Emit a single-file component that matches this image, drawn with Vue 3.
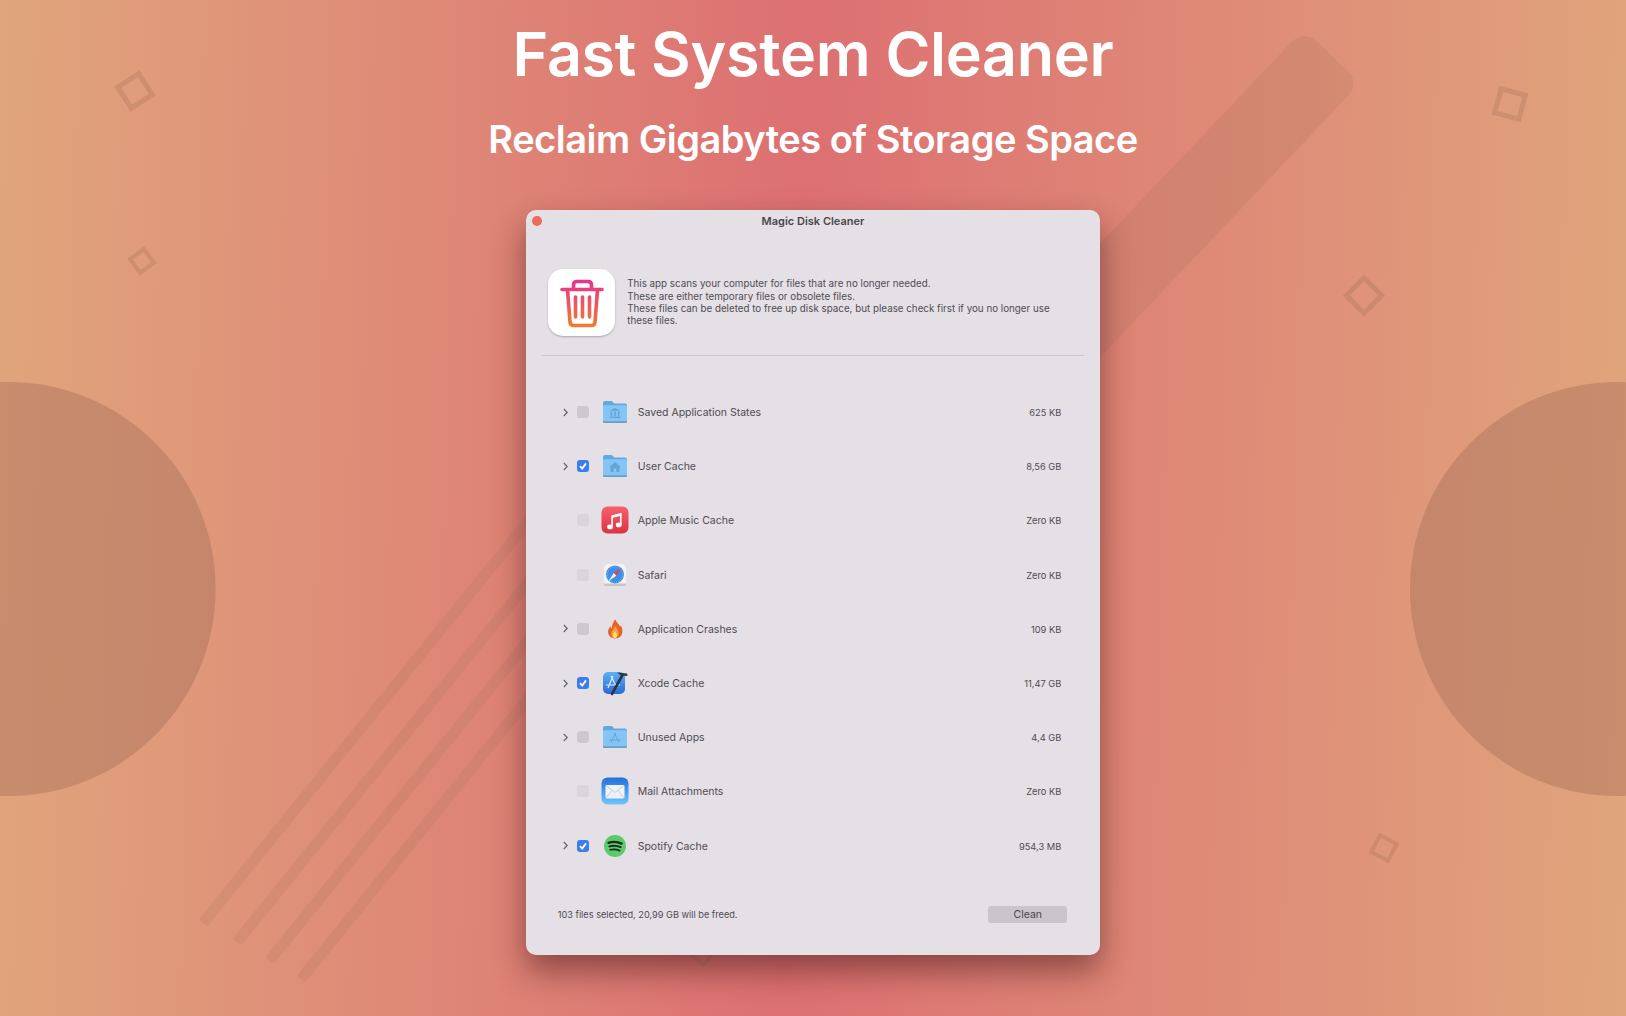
<template>
  <div class="page">
    <!-- background decoration -->
    <svg class="backdrop" width="1626" height="1016" viewBox="0 0 1626 1016">
      <g fill="#a8725a" fill-opacity="0.45">
        <circle cx="8.6" cy="589" r="207" />
        <circle cx="1617" cy="589" r="207" />
      </g>
      <rect
        x="0"
        y="-39"
        width="500"
        height="78"
        rx="17"
        fill="#a8725a"
        fill-opacity="0.22"
        transform="translate(1332 56) rotate(133.5)"
      />
      <g fill="#a8725a" fill-opacity="0.2">
        <rect
          v-for="l in stripes"
          :key="l.x"
          x="0"
          y="-5.5"
          width="520"
          height="11"
          rx="3"
          :transform="`translate(${l.x} ${l.y}) rotate(-51)`"
        />
      </g>
      <g fill="none" stroke="#a8725a" stroke-opacity="0.32">
        <rect
          v-for="d in diamonds"
          :key="d.x"
          :x="-d.s / 2"
          :y="-d.s / 2"
          :width="d.s"
          :height="d.s"
          :stroke-width="d.w"
          :transform="`translate(${d.x} ${d.y}) rotate(${d.r})`"
        />
      </g>
    </svg>

    <header class="heading">
      <h1>Fast System Cleaner</h1>
      <h2>Reclaim Gigabytes of Storage Space</h2>
    </header>

    <section class="window">
      <div class="titlebar">
        <span class="close-dot"></span>
        <span class="window-title">Magic Disk Cleaner</span>
      </div>

      <div class="intro">
        <div class="app-icon">
          <svg width="67" height="67" viewBox="0 0 67 67" fill="none">
            <defs>
              <linearGradient id="trash" x1="0" y1="12" x2="0" y2="58" gradientUnits="userSpaceOnUse">
                <stop offset="0" stop-color="#e8338f" />
                <stop offset="1" stop-color="#ef7d2c" />
              </linearGradient>
            </defs>
            <g stroke="url(#trash)" stroke-width="3.6" stroke-linecap="round" stroke-linejoin="round">
              <path d="M14 20.5 H54" />
              <path d="M25.5 20 V16 Q25.5 12.5 29 12.5 H40 Q43.5 12.5 43.5 16 V20" />
              <path d="M19.5 21 L22 53 Q22.3 56.5 25.5 56.5 H43.5 Q46.7 56.5 47 53 L49.5 21" />
              <path d="M27.5 28 V48 M34.5 28 V48 M41.5 28 V48" />
            </g>
          </svg>
        </div>
        <p class="intro-text">
          This app scans your computer for files that are no longer needed.<br />
          These are either temporary files or obsolete files.<br />
          These files can be deleted to free up disk space, but please check first if you no longer use these files.
        </p>
      </div>

      <div class="divider"></div>

      <ul class="list">
        <li v-for="item in items" :key="item.name" class="row">
          <span class="chevron">
            <svg v-if="item.expand" width="7" height="9" viewBox="0 0 7 9" fill="none">
              <path d="M1.8 1 L5.2 4.5 L1.8 8" stroke="#66636a" stroke-width="1.2" />
            </svg>
          </span>
          <span class="check" :class="{ on: item.checked, faint: !item.expand }">
            <svg v-if="item.checked" width="12" height="12" viewBox="0 0 12 12" fill="none">
              <path d="M3 6.2 L5.2 8.6 L9 3.4" stroke="#fff" stroke-width="1.8" />
            </svg>
          </span>
          <span class="icon">
            <!-- folder with a small glyph -->
            <svg v-if="item.icon === 'folder'" width="26" height="24" viewBox="0 0 26 24">
              <path d="M1 3 Q1 1 3 1 H9 Q10.5 1 11.5 2.5 L12 3.5 H23 Q25 3.5 25 5.5 V21 Q25 23 23 23 H3 Q1 23 1 21 Z" fill="#5fa9e2" />
              <path d="M1 6.5 Q1 5.2 2.4 5.2 H23.6 Q25 5.2 25 6.5 V20.5 Q25 21.6 23.8 21.6 H2.2 Q1 21.6 1 20.5 Z" fill="#85c5f5" />
              <path d="M1 20.5 Q1 21.6 2.2 21.6 H23.8 Q25 21.6 25 20.5 V21.5 Q25 23 23.5 23 H2.5 Q1 23 1 21.5 Z" fill="#6a9cc4" />
              <g v-if="item.glyph === 'bank'" fill="#63a5da">
                <path d="M13 8 L18.5 10.8 H7.5 Z" />
                <path d="M8.5 11.5 H10 V16 H8.5 Z M12.2 11.5 H13.8 V16 H12.2 Z M16 11.5 H17.5 V16 H16 Z" />
                <path d="M7.5 16.6 H18.5 V18 H7.5 Z" />
              </g>
              <path
                v-if="item.glyph === 'home'"
                d="M13 8 L19 13.2 H17.5 V18 H14.4 V14.6 H11.6 V18 H8.5 V13.2 H7 Z"
                fill="#63a5da"
              />
              <g v-if="item.glyph === 'apps'" stroke="#63a5da" stroke-width="1" fill="none">
                <path d="M13.5 8 L9 17.5 M12.5 8 L17 17.5 M7 15 H19" />
              </g>
            </svg>

            <svg v-else-if="item.icon === 'music'" width="28" height="28" viewBox="0 0 28 28">
              <defs>
                <linearGradient id="music" x1="0" y1="0" x2="0" y2="1">
                  <stop offset="0" stop-color="#f7606f" />
                  <stop offset="1" stop-color="#dc3340" />
                </linearGradient>
              </defs>
              <rect x="0.5" y="0.5" width="27" height="27" rx="6" fill="url(#music)" />
              <g fill="#fff">
                <path d="M10.3 9.4 L20.6 6.8 V18.8 H19 V10 L11.9 11.8 V20.8 H10.3 Z" />
                <ellipse cx="9" cy="20.9" rx="2.9" ry="2.3" />
                <ellipse cx="17.7" cy="18.9" rx="2.9" ry="2.3" />
              </g>
            </svg>

            <svg v-else-if="item.icon === 'safari'" width="24" height="24" viewBox="0 0 24 24">
              <rect x="1" y="1" width="22" height="22" rx="5" fill="#f3f2f4" />
              <rect x="1" y="20.5" width="22" height="2.5" rx="1.2" fill="#c9c6c2" />
              <circle cx="12" cy="11.4" r="9" fill="#3f8fe4" />
              <circle cx="12" cy="11.4" r="7.6" fill="none" stroke="#9cc6f0" stroke-width="0.8" stroke-dasharray="0.8 1.2" />
              <path d="M18.4 4.8 L10.8 10 L13.3 12.8 Z" fill="#e8434a" />
              <path d="M5.6 18 L10.8 10 L13.3 12.8 Z" fill="#f4f4f4" />
            </svg>

            <svg v-else-if="item.icon === 'flame'" width="18" height="22" viewBox="0 0 22 26">
              <path d="M11.5 1 C12.5 5 16 6.5 17.5 10.5 C18 9.5 18 8.8 17.8 8 C20 10.5 20 14 20 16 C20 21.5 16 24.5 11 24.5 C6 24.5 2.5 21 2.5 16.5 C2.5 13.5 4 11 5.5 9.5 C5.5 11 6 12 7 12.5 C7 8 9 4 11.5 1 Z" fill="#e8622c" />
              <path d="M11.5 9 C12 12 15.5 14 15.5 18 C15.5 21.5 13.5 24 11 24 C8.5 24 6.5 21.8 6.5 19 C6.5 16 9.5 13 11.5 9 Z" fill="#f9a03a" />
              <path d="M11 15 C11.5 17 13.5 18.5 13.5 20.5 C13.5 22.5 12.4 24 11 24 C9.6 24 8.5 22.5 8.5 20.8 C8.5 19 10 17 11 15 Z" fill="#fde27a" />
            </svg>

            <svg v-else-if="item.icon === 'xcode'" width="26" height="26" viewBox="0 0 26 26" fill="none">
              <defs>
                <linearGradient id="xcode" x1="0" y1="0" x2="0" y2="1">
                  <stop offset="0" stop-color="#5cb0f4" />
                  <stop offset="1" stop-color="#2a6ad8" />
                </linearGradient>
              </defs>
              <rect x="1" y="2" width="22" height="22" rx="5" fill="url(#xcode)" />
              <g stroke="#dcedfc" stroke-width="1.2">
                <path d="M11 6 L6 18 M9 6 L15 18 M4 15 H18" />
              </g>
              <path d="M10 24 L20.5 5" stroke="#2b3444" stroke-width="2.6" stroke-linecap="round" />
              <path d="M15 2.6 L25 3.6 L25.5 6 L19 5.6 Z" fill="#2b3444" />
            </svg>

            <svg v-else-if="item.icon === 'mail'" width="28" height="28" viewBox="0 0 28 28">
              <defs>
                <linearGradient id="mail" x1="0" y1="0" x2="0" y2="1">
                  <stop offset="0" stop-color="#2470dc" />
                  <stop offset="1" stop-color="#6ec6fa" />
                </linearGradient>
              </defs>
              <rect x="0.5" y="0.5" width="27" height="27" rx="6" fill="url(#mail)" />
              <rect x="4.5" y="8" width="19" height="13.5" rx="1.4" fill="#eef1f6" />
              <path d="M4.8 8.5 L14 15.5 L23.2 8.5 M4.8 21 L11 13.5 M23.2 21 L17 13.5" stroke="#b8c4d4" stroke-width="0.8" fill="none" />
            </svg>

            <svg v-else-if="item.icon === 'spotify'" width="24" height="24" viewBox="0 0 24 24" fill="none">
              <circle cx="12" cy="12" r="11" fill="#5cc96b" />
              <g stroke="#1c2a1f" stroke-linecap="round">
                <path d="M5.5 8.8 Q12 6.6 18.6 9.6" stroke-width="2.3" />
                <path d="M6.4 12.4 Q12 10.8 17.6 13.2" stroke-width="2" />
                <path d="M7.2 15.8 Q12 14.6 16.6 16.6" stroke-width="1.7" />
              </g>
            </svg>
          </span>
          <span class="name">{{ item.name }}</span>
          <span class="size">{{ item.size }}</span>
        </li>
      </ul>

      <footer class="footer">
        <span class="summary">103 files selected, 20,99 GB will be freed.</span>
        <button class="clean" type="button">Clean</button>
      </footer>
    </section>
  </div>
</template>

<script setup>
// outlined squares scattered over the background
const diamonds = [
  { x: 135, y: 91, s: 25, w: 5, r: -33 },
  { x: 142, y: 261, s: 17, w: 4, r: -36 },
  { x: 1510, y: 104, s: 25, w: 5, r: 15 },
  { x: 1364, y: 295.5, s: 25, w: 5, r: 45 },
  { x: 1384, y: 848, s: 19, w: 4, r: 28 },
  { x: 702, y: 948, s: 24, w: 4, r: 40 },
];

// thin diagonal bars going behind the window
const stripes = [
  { x: 203, y: 923 },
  { x: 237, y: 942 },
  { x: 269, y: 961 },
  { x: 301, y: 979 },
];

const items = [
  { name: "Saved Application States", size: "625 KB", icon: "folder", glyph: "bank", expand: true, checked: false },
  { name: "User Cache", size: "8,56 GB", icon: "folder", glyph: "home", expand: true, checked: true },
  { name: "Apple Music Cache", size: "Zero KB", icon: "music", expand: false, checked: false },
  { name: "Safari", size: "Zero KB", icon: "safari", expand: false, checked: false },
  { name: "Application Crashes", size: "109 KB", icon: "flame", expand: true, checked: false },
  { name: "Xcode Cache", size: "11,47 GB", icon: "xcode", expand: true, checked: true },
  { name: "Unused Apps", size: "4,4 GB", icon: "folder", glyph: "apps", expand: true, checked: false },
  { name: "Mail Attachments", size: "Zero KB", icon: "mail", expand: false, checked: false },
  { name: "Spotify Cache", size: "954,3 MB", icon: "spotify", expand: true, checked: true },
];
</script>

<style>
html,
body {
  margin: 0;
  background: #e0a47c;
}
</style>

<style scoped>
.page {
  position: relative;
  width: 1626px;
  height: 1016px;
  overflow: hidden;
  background: linear-gradient(91.5deg, #e0a57c 0%, #dd7072 49%, #e0a57c 100%);
  font-family: Inter, "Noto Sans", sans-serif;
  color: #4f4c52;
}

.backdrop {
  position: absolute;
  left: 0;
  top: 0;
}

.heading {
  position: relative;
  padding-top: 16px;
  text-align: center;
  color: #fff;
}

.heading h1 {
  margin: 0;
  font-size: 61px;
  line-height: 76px;
  font-weight: 600;
  letter-spacing: -0.3px;
}

.heading h2 {
  margin: 24px 0 0;
  font-size: 38px;
  line-height: 46px;
  font-weight: 600;
  letter-spacing: -0.5px;
}

.window {
  position: relative;
  box-sizing: border-box;
  width: 574.6px;
  height: 744.5px;
  margin: 48px auto 0;
  background: #e4e0e6;
  border-radius: 10px;
  box-shadow: 0 16px 32px rgba(50, 12, 12, 0.48);
}

.titlebar {
  position: relative;
  height: 22px;
  display: flex;
  align-items: center;
  justify-content: center;
}

.close-dot {
  position: absolute;
  left: 6.5px;
  top: 6px;
  width: 10px;
  height: 10px;
  border-radius: 50%;
  background: #ec6a5e;
}

.window-title {
  font-size: 11px;
  font-weight: 600;
  color: #4a484d;
}

.intro {
  display: flex;
  align-items: center;
  gap: 12.5px;
  margin-top: 36.5px;
  padding: 0 38px 0 22px;
}

.app-icon {
  flex: none;
  width: 67px;
  height: 67px;
  background: #fff;
  border-radius: 15px;
  box-shadow: 0 1px 2px rgba(0, 0, 0, 0.25);
}

.intro-text {
  margin: 2px 0 0;
  font-size: 9.8px;
  line-height: 12.4px;
}

.divider {
  height: 1px;
  margin: 19px 16px 0;
  background: #cdc9cf;
}

.list {
  list-style: none;
  margin: 29.5px 0 0;
  padding: 0 39px 0 34px;
}

.row {
  display: flex;
  align-items: center;
  height: 54.2px;
  font-size: 10.5px;
}

.chevron {
  flex: none;
  width: 12px;
  display: flex;
  justify-content: center;
}

.check {
  flex: none;
  width: 12px;
  height: 12px;
  margin-left: 5px;
  border-radius: 3px;
  background: #ccc8ce;
  display: flex;
}

.check.faint {
  background: #d9d5db;
}

.check.on {
  background: #3b7ded;
}

.icon {
  flex: none;
  width: 36px;
  margin: 0 5px 0 8px;
  display: flex;
  justify-content: center;
}

.name {
  flex: 1;
  padding-top: 1px;
}

.size {
  padding-top: 1px;
  font-size: 9.3px;
}

.footer {
  display: flex;
  align-items: center;
  justify-content: space-between;
  margin-top: 33px;
  padding: 0 33px 0 32px;
}

.summary {
  font-size: 9.2px;
}

.clean {
  width: 79px;
  height: 17px;
  padding: 0;
  border: none;
  border-radius: 3px;
  background: #c9c5cb;
  color: #47454a;
  font-family: inherit;
  font-size: 10.5px;
}
</style>
